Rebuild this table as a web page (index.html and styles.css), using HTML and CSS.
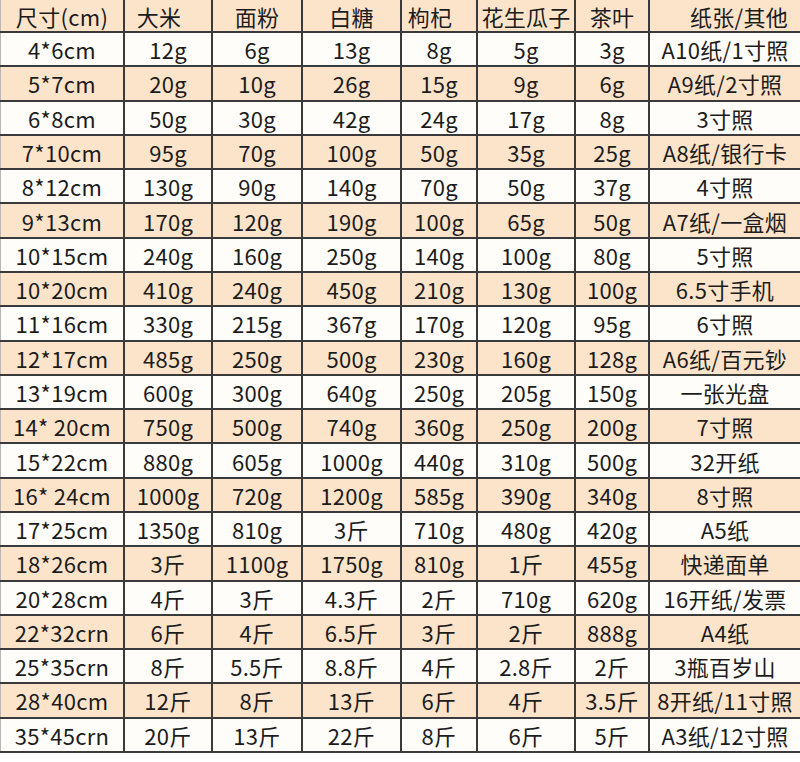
FILE: index.html
```html
<!DOCTYPE html>
<html lang="zh">
<head>
<meta charset="utf-8">
<title>尺寸对照表</title>
<link rel="stylesheet" href="styles.css">
</head>
<body>
<div class="table">
  <div class="row head"><div class="c">尺寸(cm)</div><div class="c h2">大米</div><div class="c">面粉</div><div class="c">白糖</div><div class="c h5">枸杞</div><div class="c">花生瓜子</div><div class="c">茶叶</div><div class="c h8">纸张/其他</div></div>
  <div class="row"><div class="c">4*6cm</div><div class="c">12g</div><div class="c">6g</div><div class="c">13g</div><div class="c">8g</div><div class="c">5g</div><div class="c">3g</div><div class="c">A10纸/1寸照</div></div>
  <div class="row"><div class="c">5*7cm</div><div class="c">20g</div><div class="c">10g</div><div class="c">26g</div><div class="c">15g</div><div class="c">9g</div><div class="c">6g</div><div class="c">A9纸/2寸照</div></div>
  <div class="row"><div class="c">6*8cm</div><div class="c">50g</div><div class="c">30g</div><div class="c">42g</div><div class="c">24g</div><div class="c">17g</div><div class="c">8g</div><div class="c">3寸照</div></div>
  <div class="row"><div class="c">7*10cm</div><div class="c">95g</div><div class="c">70g</div><div class="c">100g</div><div class="c">50g</div><div class="c">35g</div><div class="c">25g</div><div class="c">A8纸/银行卡</div></div>
  <div class="row"><div class="c">8*12cm</div><div class="c">130g</div><div class="c">90g</div><div class="c">140g</div><div class="c">70g</div><div class="c">50g</div><div class="c">37g</div><div class="c">4寸照</div></div>
  <div class="row"><div class="c">9*13cm</div><div class="c">170g</div><div class="c">120g</div><div class="c">190g</div><div class="c">100g</div><div class="c">65g</div><div class="c">50g</div><div class="c">A7纸/一盒烟</div></div>
  <div class="row"><div class="c">10*15cm</div><div class="c">240g</div><div class="c">160g</div><div class="c">250g</div><div class="c">140g</div><div class="c">100g</div><div class="c">80g</div><div class="c">5寸照</div></div>
  <div class="row"><div class="c">10*20cm</div><div class="c">410g</div><div class="c">240g</div><div class="c">450g</div><div class="c">210g</div><div class="c">130g</div><div class="c">100g</div><div class="c">6.5寸手机</div></div>
  <div class="row"><div class="c">11*16cm</div><div class="c">330g</div><div class="c">215g</div><div class="c">367g</div><div class="c">170g</div><div class="c">120g</div><div class="c">95g</div><div class="c">6寸照</div></div>
  <div class="row"><div class="c">12*17cm</div><div class="c">485g</div><div class="c">250g</div><div class="c">500g</div><div class="c">230g</div><div class="c">160g</div><div class="c">128g</div><div class="c">A6纸/百元钞</div></div>
  <div class="row"><div class="c">13*19cm</div><div class="c">600g</div><div class="c">300g</div><div class="c">640g</div><div class="c">250g</div><div class="c">205g</div><div class="c">150g</div><div class="c">一张光盘</div></div>
  <div class="row"><div class="c">14* 20cm</div><div class="c">750g</div><div class="c">500g</div><div class="c">740g</div><div class="c">360g</div><div class="c">250g</div><div class="c">200g</div><div class="c">7寸照</div></div>
  <div class="row"><div class="c">15*22cm</div><div class="c">880g</div><div class="c">605g</div><div class="c">1000g</div><div class="c">440g</div><div class="c">310g</div><div class="c">500g</div><div class="c">32开纸</div></div>
  <div class="row"><div class="c">16* 24cm</div><div class="c">1000g</div><div class="c">720g</div><div class="c">1200g</div><div class="c">585g</div><div class="c">390g</div><div class="c">340g</div><div class="c">8寸照</div></div>
  <div class="row"><div class="c">17*25cm</div><div class="c">1350g</div><div class="c">810g</div><div class="c">3斤</div><div class="c">710g</div><div class="c">480g</div><div class="c">420g</div><div class="c">A5纸</div></div>
  <div class="row"><div class="c">18*26cm</div><div class="c">3斤</div><div class="c">1100g</div><div class="c">1750g</div><div class="c">810g</div><div class="c">1斤</div><div class="c">455g</div><div class="c">快递面单</div></div>
  <div class="row"><div class="c">20*28cm</div><div class="c">4斤</div><div class="c">3斤</div><div class="c">4.3斤</div><div class="c">2斤</div><div class="c">710g</div><div class="c">620g</div><div class="c">16开纸/发票</div></div>
  <div class="row"><div class="c">22*32crn</div><div class="c">6斤</div><div class="c">4斤</div><div class="c">6.5斤</div><div class="c">3斤</div><div class="c">2斤</div><div class="c">888g</div><div class="c">A4纸</div></div>
  <div class="row"><div class="c">25*35crn</div><div class="c">8斤</div><div class="c">5.5斤</div><div class="c">8.8斤</div><div class="c">4斤</div><div class="c">2.8斤</div><div class="c">2斤</div><div class="c">3瓶百岁山</div></div>
  <div class="row"><div class="c">28*40cm</div><div class="c">12斤</div><div class="c">8斤</div><div class="c">13斤</div><div class="c">6斤</div><div class="c">4斤</div><div class="c">3.5斤</div><div class="c">8开纸/11寸照</div></div>
  <div class="row"><div class="c">35*45crn</div><div class="c">20斤</div><div class="c">13斤</div><div class="c">22斤</div><div class="c">8斤</div><div class="c">6斤</div><div class="c">5斤</div><div class="c">A3纸/12寸照</div></div>
</div>
</body>
</html>
```

FILE: styles.css
```css
html, body {
  margin: 0;
  padding: 0;
  background: #ffffff;
}
body {
  width: 800px;
  height: 762px;
  overflow: hidden;
  font-family: "Noto Sans CJK SC", "Noto Sans", sans-serif;
  color: #1c1c1c;
}
.table {
  display: flex;
  flex-direction: column;
  width: 800px;
}
.row {
  display: grid;
  grid-template-columns: 123px 88px 90px 99px 76px 98px 74px 152px;
  height: 34.29px;
  box-sizing: border-box;
  border-bottom: 2px solid #3a3a3a;
  background: #fffdf9;
}
.row:nth-child(odd) {
  background: #fce4cb;
}
.row.head {
  height: 33px;
}
.c {
  display: flex;
  align-items: center;
  justify-content: center;
  box-sizing: border-box;
  border-left: 2px solid #3a3a3a;
  font-size: 22px;
  line-height: 1;
  white-space: nowrap;
  letter-spacing: 0.3px;
}
.c:first-child {
  border-left: 1px solid #b8b8b8;
}
.head .h2 { padding-right: 18px; }
.head .h5 { padding-right: 18px; }
.head .h8 { padding-left: 28px; }
```
